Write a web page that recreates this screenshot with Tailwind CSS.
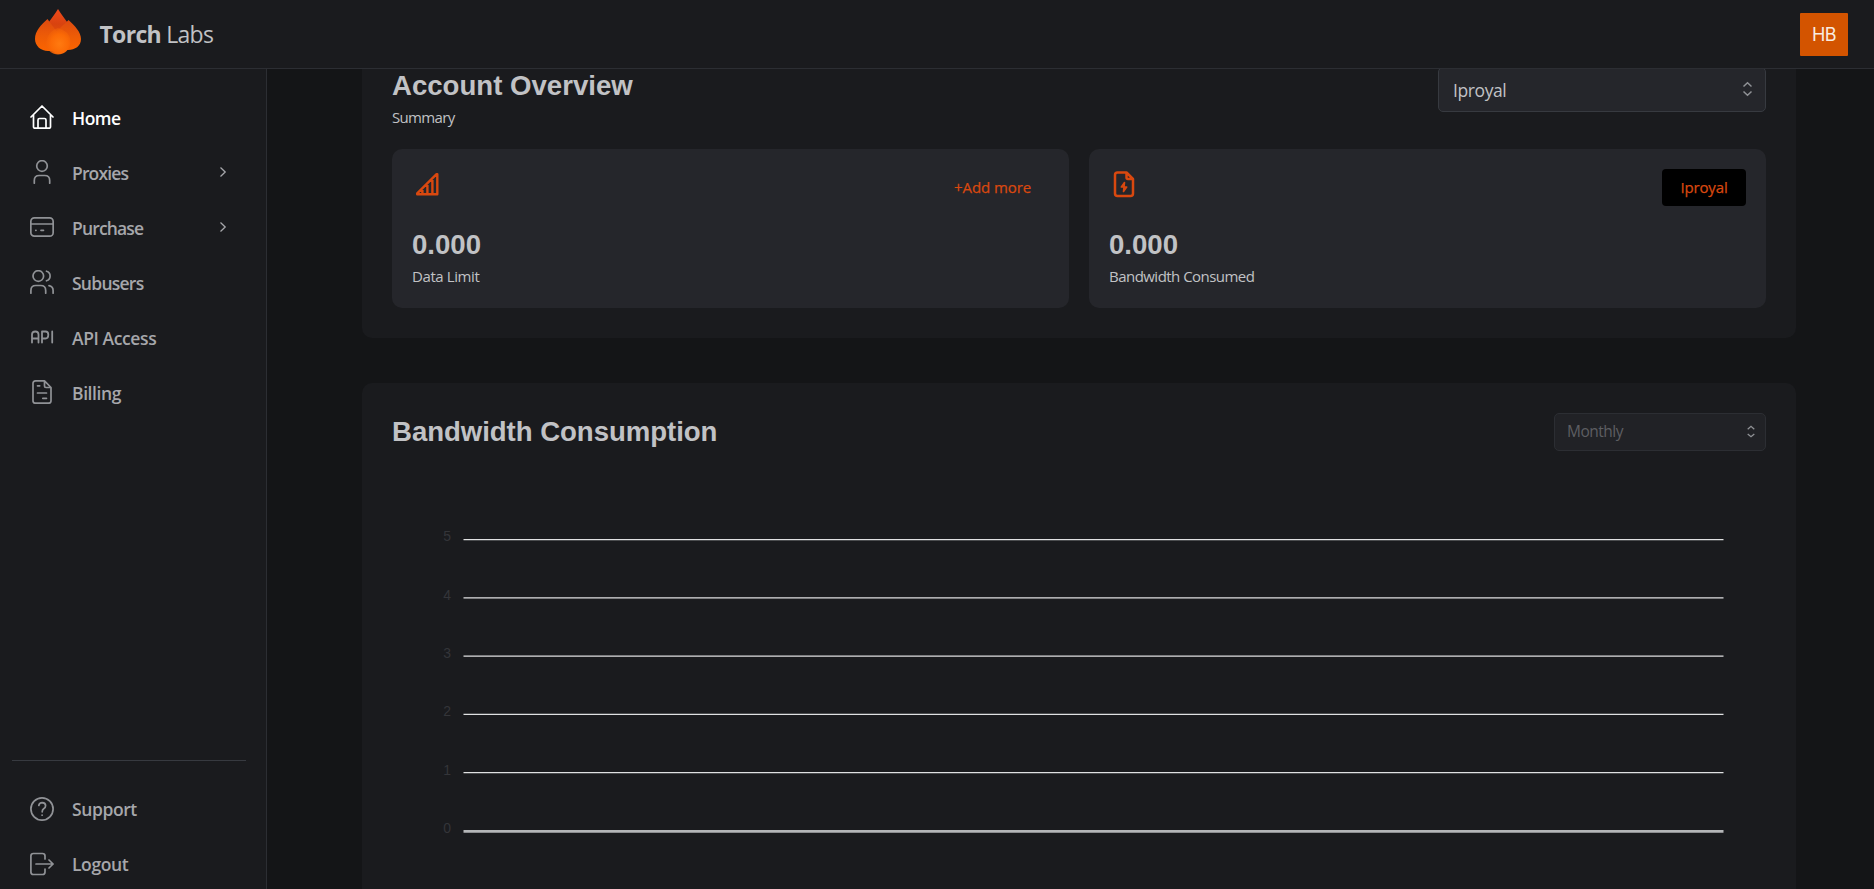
<!DOCTYPE html>
<html lang="en">
<head>
<meta charset="utf-8">
<title>Torch Labs</title>
<script src="https://cdn.jsdelivr.net/npm/@tailwindcss/browser@4"></script>
</head>
<body class="flex h-[889px] w-[1874px] flex-col overflow-hidden bg-[#141517] font-['Open_Sans','Noto_Sans',sans-serif] text-[#c1c2c5]">
<header class="relative z-10 flex h-[69px] shrink-0 items-center border-b border-[#2c2e33] bg-[#1a1b1e] pr-[26px] pl-[34px]">
  <svg class="-mt-[7px] h-[48px] w-[48px]" viewBox="0 0 48 48">
    <defs>
      <linearGradient id="back" x1="0" y1="0" x2="0" y2="1"><stop offset="0" stop-color="#f04a1c"/><stop offset=".4" stop-color="#d8430f"/><stop offset="1" stop-color="#f06000"/></linearGradient>
      <linearGradient id="side" x1="0" y1="0" x2="0" y2="1"><stop offset="0" stop-color="#dc4a10"/><stop offset=".55" stop-color="#ee5c06"/><stop offset="1" stop-color="#fb6400"/></linearGradient>
      <radialGradient id="mid" cx=".55" cy=".6" r=".6"><stop offset="0" stop-color="#ff7a10"/><stop offset=".6" stop-color="#fb6a06"/><stop offset="1" stop-color="#f06008" stop-opacity=".5"/></radialGradient>
    </defs>
    <path d="M24 2C27 7 31 12 34.500 17L36 40H12L13.500 17C17 12 21 7 24 2Z" fill="url(#back)"/>
    <path d="M13.500 12C7 18 1 24 1 32C1 39 7 44 14 44L24 44L24 26C20 21 17 17 13.500 12Z" fill="url(#side)"/>
    <path d="M34.500 13C41 19 47 25 47 32C47 39 41 43 34 43L22 43L20 28C25 21 30 18 34.500 13Z" fill="url(#side)"/>
    <path d="M24 21C33 24 38 29 36 38C34 44 30 47.500 24 47.500C18 47.500 14 44 12 38C12 29 17 23 24 21Z" fill="url(#mid)"/>
  </svg>
  <div class="ml-[17.500px] text-[23px] leading-none tracking-[-0.7px]"><b>Torch</b> Labs</div>
  <div class="ml-auto flex h-[43px] w-[48px] items-center justify-center rounded-[1px] bg-[#d35400] font-['Inter'] text-[18px] tracking-[-0.6px] text-[#f8ece0]">HB</div>
</header>
<div class="flex min-h-0 flex-1">
  <aside class="flex w-[267px] shrink-0 flex-col border-r border-[#2c2e33] bg-[#1a1b1e] pt-[21px] text-[17.500px] font-semibold tracking-[-0.5px] text-[#a6a7ab]">
    <a class="flex h-[55px] items-center gap-[18px] pl-[30px] text-white">
      <svg class="size-6 -mt-px" viewBox="0 0 24 24" fill="none" stroke="currentColor" stroke-width="1.700" stroke-linecap="round" stroke-linejoin="round"><path d="M1 12L12 1L23 12M3.500 10V22Q3.500 23.200 4.800 23.200H19.200Q20.500 23.200 20.500 22V10M8 23V15Q8 13.500 9.500 13.500H14.500Q16 13.500 16 15V23"/></svg>
      <span class="pt-px">Home</span></a>
    <a class="flex h-[55px] items-center gap-[18px] pr-[36px] pl-[30px]">
      <svg class="size-6 -mt-px" viewBox="0 0 24 24" fill="none" stroke="#909296" stroke-width="1.700" stroke-linecap="round"><circle cx="12" cy="6" r="5.300"/><path d="M4.300 23.200V20.500Q4.300 15.500 9.300 15.500H14.700Q19.700 15.500 19.700 20.500V23.200"/></svg>
      <span class="pt-px tracking-[-0.85px]">Proxies</span>
      <svg class="ml-auto -mt-0.5 size-3.5" viewBox="0 0 14 14" fill="none" stroke="#a6a7ab" stroke-width="1.300"><path d="M4.500 2.500L9.200 7L4.500 11.500"/></svg></a>
    <a class="flex h-[55px] items-center gap-[18px] pr-[36px] pl-[30px]">
      <svg class="size-6 -mt-px" viewBox="0 0 24 24" fill="none" stroke="#909296" stroke-width="1.700" stroke-linecap="round"><rect x=".85" y="2.800" width="22.300" height="18.400" rx="3.500"/><path d="M1 9H23M5.800 15.300H6M11 15.300H13.500"/></svg>
      <span class="pt-px tracking-[-0.85px]">Purchase</span>
      <svg class="ml-auto -mt-0.5 size-3.5" viewBox="0 0 14 14" fill="none" stroke="#a6a7ab" stroke-width="1.300"><path d="M4.500 2.500L9.200 7L4.500 11.500"/></svg></a>
    <a class="flex h-[55px] items-center gap-[18px] pl-[30px]">
      <svg class="size-6 -mt-px" viewBox="0 0 24 24" fill="none" stroke="#909296" stroke-width="1.700" stroke-linecap="round"><circle cx="8.300" cy="6" r="5.300"/><path d="M.9 23.200V20.500Q.9 15.500 5.800 15.500H10.700Q15.700 15.500 15.700 20.500V23.200M16.500 1.200A5 5 0 0 1 16.500 10.800M19 15.700Q23.100 16.500 23.100 20.500V23.200"/></svg>
      <span class="pt-px tracking-[-0.75px]">Subusers</span></a>
    <a class="flex h-[55px] items-center gap-[18px] pl-[30px]">
      <svg class="size-6 -mt-px" viewBox="0 0 24 24" fill="none" stroke="#909296" stroke-width="1.800" stroke-linecap="round" stroke-linejoin="round"><path d="M2 17.500V9.500Q2 6.500 5.300 6.500Q8.500 6.500 8.500 9.500V17.500M2 13.500H8.500M12 17.500V6.500H15.500Q18.300 6.500 18.300 9.500Q18.300 13.500 15.500 13.500H12M22.200 6.500V17.500"/></svg>
      <span class="pt-px tracking-[-0.4px]">API Access</span></a>
    <a class="flex h-[55px] items-center gap-[18px] pl-[30px]">
      <svg class="size-6 -mt-px" viewBox="0 0 24 24" fill="none" stroke="#909296" stroke-width="1.700" stroke-linecap="round" stroke-linejoin="round"><path d="M14.500 .9H5.500Q3 .9 3 3.300V20.700Q3 23.200 5.500 23.200H18.500Q21 23.200 21 20.700V7.500ZM14.500 .9V6Q14.500 7.500 16 7.500H21M7.500 5.800H9.700M7.500 13H16.500M12.800 18.300H16.500"/></svg>
      <span class="pt-px tracking-[-0.4px]">Billing</span></a>
    <div class="mt-auto mr-5 ml-3 border-t border-[#373a40]"></div>
    <a class="mt-[21px] flex h-[55px] shrink-0 items-center gap-[18px] pl-[30px]">
      <svg class="size-6 -mt-px" viewBox="0 0 24 24" fill="none" stroke="#909296" stroke-width="1.700" stroke-linecap="round"><circle cx="12" cy="12" r="11.100"/><path d="M8.800 8.500Q9.300 5.600 12.200 5.600Q15.600 5.800 15.600 8.700Q15.600 10.500 13.700 11.700Q12.200 12.700 12.200 14.800M12.100 18V18.200"/></svg>
      <span class="pt-px tracking-[-0.4px]">Support</span></a>
    <a class="-mb-[2.500px] flex h-[55px] shrink-0 items-center gap-[18px] pl-[30px]">
      <svg class="size-6 -mt-px" viewBox="0 0 24 24" fill="none" stroke="#909296" stroke-width="1.700" stroke-linecap="round" stroke-linejoin="round"><path d="M15 7V4Q15 1.500 12.500 1.500H3.400Q.9 1.500 .9 4V20Q.9 22.500 3.400 22.500H12.500Q15 22.500 15 20V17M6 12H23M19 8L23.100 12L19 16"/></svg>
      <span class="pt-px tracking-[-0.4px]">Logout</span></a>
  </aside>
  <main class="flex min-w-0 flex-1 flex-col gap-[45px] overflow-hidden pr-[78px] pl-[95px]">
    <section class="-mt-8 h-[301px] shrink-0 rounded-[10px] bg-[#1a1b1e] px-[30px] pt-[30px]">
      <div class="flex h-[82px] items-start justify-between">
        <div>
          <h1 class="mt-[3px] font-['Liberation_Sans'] text-[27.600px] leading-[32px] font-bold">Account Overview</h1>
          <p class="mt-[4px] text-[15px] leading-[22px] tracking-[-0.65px]">Summary</p>
        </div>
        <div class="flex h-[45px] w-[328px] items-center justify-between rounded-[5px] border border-[#373a40] bg-[#25262b] px-[14px] text-[17.500px] tracking-[-0.4px]">
          <span class="pt-0.5">Iproyal</span>
          <svg class="mr-[-5px] size-[17px]" viewBox="0 0 17 17" fill="none" stroke="#909296" stroke-width="1.500"><path d="M4.500 5.500L8.500 1.800L12.500 5.500M4.500 10.500L8.500 14.200L12.500 10.500"/></svg>
        </div>
      </div>
      <div class="grid grid-cols-2 gap-5">
        <div class="h-[159px] rounded-[10px] bg-[#25262b] px-5 pt-5">
          <div class="flex h-[56px] items-start justify-between">
            <svg class="mt-[1px] ml-[1px] size-[30px]" viewBox="0 0 30 30" fill="none" stroke="#d9480f" stroke-width="2.400" stroke-linejoin="round" stroke-linecap="round"><path d="M24.300 4.300V24.300H4.200V23.300L23.300 4.300ZM9.400 20V24M14.400 15V24M19.400 10V24"/></svg>
            <span class="mt-[7px] mr-[18px] text-[15px] leading-[22px] font-medium tracking-[-0.1px] text-[#d9480f] [-webkit-text-stroke:0.25px_#d9480f]">+Add more</span>
          </div>
          <div class="mt-[4px] font-['Liberation_Sans'] text-[27.600px] leading-[32px] font-bold">0.000</div>
          <p class="mt-[4px] text-[15px] leading-[22px] tracking-[-0.4px]">Data Limit</p>
        </div>
        <div class="h-[159px] rounded-[10px] bg-[#25262b] px-5 pt-5">
          <div class="flex h-[56px] items-start justify-between">
            <svg class="size-[30px]" viewBox="0 0 30 30" fill="none" stroke="#d9480f" stroke-width="2.500" stroke-linejoin="round" stroke-linecap="round"><path d="M17.500 3.500H8.500Q6 3.500 6 6V24.500Q6 27 8.500 27H21.500Q24 27 24 24.500V10ZM17.500 3.500V8.500Q17.500 10 19 10H24"/><path d="M15.500 13.500L12.300 18H17.700L14.500 22.500Z" fill="#d9480f" stroke-width="1.600"/></svg>
            <span class="flex h-[37px] w-[84px] items-center justify-center rounded-[4px] bg-black text-[15px] font-medium tracking-[-0.15px] text-[#d9480f] [-webkit-text-stroke:0.25px_#d9480f]">Iproyal</span>
          </div>
          <div class="mt-[4px] font-['Liberation_Sans'] text-[27.600px] leading-[32px] font-bold">0.000</div>
          <p class="mt-[4px] text-[15px] leading-[22px] tracking-[-0.530px]">Bandwidth Consumed</p>
        </div>
      </div>
    </section>
    <section class="h-[560px] shrink-0 rounded-[10px] bg-[#1a1b1e] px-[30px] pt-[30px]">
      <div class="flex items-start justify-between">
        <h1 class="mt-[3px] font-['Liberation_Sans'] text-[27.600px] leading-[32px] font-bold tracking-[-0.05px]">Bandwidth Consumption</h1>
        <div class="flex h-[38px] w-[212px] items-center justify-between rounded-[5px] border border-[#2c2e33] bg-[#212226] pr-[6px] pl-[12px] text-[15.500px] tracking-[-0.5px] text-[#5d5e62]">
          <span>Monthly</span>
          <svg class="size-4" viewBox="0 0 17 17" fill="none" stroke="#909296" stroke-width="1.400"><path d="M5 5.500L8.500 2.500L12 5.500M5 10.500L8.500 13.500L12 10.500"/></svg>
        </div>
      </div>
      <svg class="mt-[49px] block h-[360px] w-[1374px]" viewBox="392 500 1374 360">
        <g stroke="#e0e1e2" stroke-width="1.250">
          <path d="M463.500 539.600H1723.500"/><path d="M463.500 597.850H1723.500"/><path d="M463.500 656H1723.500"/><path d="M463.500 714.300H1723.500"/><path d="M463.500 772.500H1723.500"/>
          <path d="M463.500 831.300H1723.500" stroke="#b4b6b8" stroke-width="2.700"/>
        </g>
        <g fill="#343539" font-family="Liberation Sans" font-size="14" text-anchor="end">
          <text x="451" y="541">5</text><text x="451" y="600">4</text><text x="451" y="658">3</text><text x="451" y="716">2</text><text x="451" y="774.500">1</text><text x="451" y="833">0</text>
        </g>
      </svg>
    </section>
  </main>
</div>
</body>
</html>
